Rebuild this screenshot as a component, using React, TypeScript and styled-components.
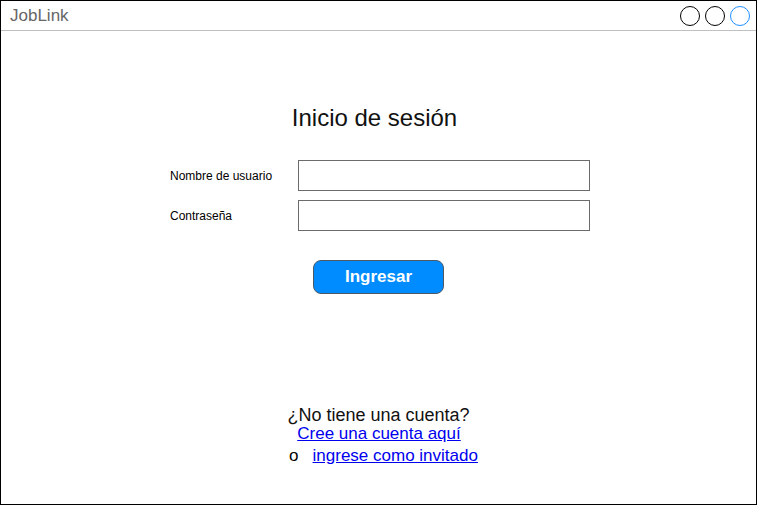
import React from "react";
import styled, { createGlobalStyle } from "styled-components";

const GlobalStyle = createGlobalStyle`
  html, body { margin: 0; padding: 0; background: #ffffff; }
  * { box-sizing: border-box; }
  body { font-family: "Liberation Sans", Arial, sans-serif; }
`;

const Frame = styled.div`
  width: 757px;
  height: 505px;
  border: 1px solid #000000;
  display: flex;
  flex-direction: column;
  background: #ffffff;
`;

const TitleBar = styled.header`
  height: 30px;
  flex: none;
  border-bottom: 1px solid #c0c0c0;
  display: flex;
  align-items: center;
  justify-content: space-between;
  padding: 0 6px 0 9px;
`;

const AppName = styled.span`
  font-size: 17px;
  line-height: 20px;
  color: #666666;
`;

const Controls = styled.div`
  display: flex;
  gap: 5px;
`;

const Dot = styled.span<{ $accent?: boolean }>`
  width: 20px;
  height: 20px;
  border-radius: 50%;
  border: 1px solid ${(p) => (p.$accent ? "#1e90ff" : "#000000")};
  display: block;
`;

const Content = styled.main`
  flex: 1;
  display: flex;
  flex-direction: column;
  align-items: center;
  padding-top: 73px;
`;

const Heading = styled.h1`
  margin: 0 0 0 -8px;
  font-size: 24px;
  line-height: 27px;
  font-weight: normal;
  color: #111111;
`;

const Form = styled.form`
  align-self: flex-start;
  margin: 29px 0 0 169px;
  display: grid;
  grid-template-columns: 128px 292px;
  row-gap: 9px;
  align-items: center;
`;

const Label = styled.label`
  font-size: 12px;
  color: #000000;
`;

const Field = styled.input`
  width: 292px;
  height: 31px;
  border: 1px solid #6b6b6b;
  border-radius: 0;
  padding: 0 6px;
  margin: 0;
  outline: none;
  font: 14px "Liberation Sans", Arial, sans-serif;
`;

const Button = styled.button`
  margin-top: 29px;
  width: 131px;
  height: 34px;
  background: #008cff;
  border: 1px solid #4d5a66;
  border-radius: 8px;
  color: #ffffff;
  font: bold 17px "Liberation Sans", Arial, sans-serif;
  padding: 0;
  cursor: pointer;
`;

const Footer = styled.div`
  margin-top: 112px;
  display: flex;
  flex-direction: column;
  align-items: center;
`;

const Question = styled.div`
  font-size: 18px;
  line-height: 18px;
  color: #111111;
`;

const LinkLine = styled.div<{ $tall?: boolean }>`
  font-size: 17px;
  line-height: ${(p) => (p.$tall ? "22px" : "18px")};
  color: #000000;
  display: flex;
  gap: 14px;
  margin-top: ${(p) => (p.$tall ? "2px" : "1px")};
  margin-left: ${(p) => (p.$tall ? "10px" : "1px")};
`;

const Link = styled.a`
  color: #0000ee;
  text-decoration: underline;
`;

export default function App() {
  return (
    <>
      <GlobalStyle />
      <Frame>
        <TitleBar>
          <AppName>JobLink</AppName>
          <Controls>
            <Dot />
            <Dot />
            <Dot $accent />
          </Controls>
        </TitleBar>
        <Content>
          <Heading>Inicio de sesión</Heading>
          <Form onSubmit={(e) => e.preventDefault()}>
            <Label htmlFor="user">Nombre de usuario</Label>
            <Field id="user" type="text" />
            <Label htmlFor="pass">Contraseña</Label>
            <Field id="pass" type="password" />
          </Form>
          <Button type="button">Ingresar</Button>
          <Footer>
            <Question>¿No tiene una cuenta?</Question>
            <LinkLine>
              <Link href="#">Cree una cuenta aquí</Link>
            </LinkLine>
            <LinkLine $tall>
              <span>o</span>
              <Link href="#">ingrese como invitado</Link>
            </LinkLine>
          </Footer>
        </Content>
      </Frame>
    </>
  );
}
